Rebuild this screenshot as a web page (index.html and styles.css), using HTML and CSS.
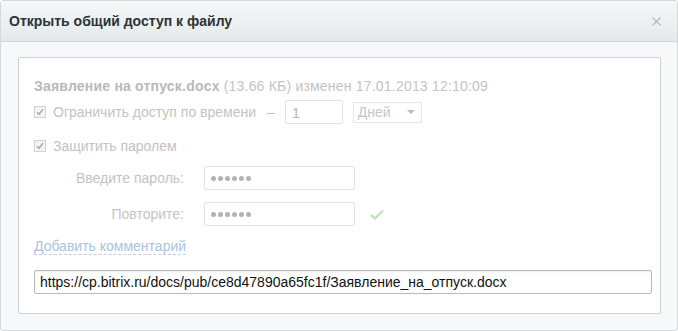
FILE: index.html
```html
<!DOCTYPE html>
<html lang="ru">

<head>
    <meta charset="UTF-8">
    <title>Открыть общий доступ к файлу</title>
    <link rel="stylesheet" href="styles.css">
</head>

<body>
    <div class="dialog">
        <div class="dialog-head">
            <span class="dialog-title">Открыть общий доступ к файлу</span>
            <span class="dialog-close">
                <svg width="9" height="9" viewBox="0 0 9 9"><path d="M0.5 0.5L8.5 8.5M8.5 0.5L0.5 8.5" stroke="#b4b8ba" stroke-width="1.1" fill="none"/></svg>
            </span>
        </div>

        <div class="dialog-body">
            <div class="panel">
                <div class="file-info"><b>Заявление на отпуск.docx</b> (13.66 КБ) изменен 17.01.2013 12:10:09</div>

                <div class="row row-time">
                    <span class="check"><svg width="8" height="8" viewBox="0 0 8 8"><path d="M1 4.2L3 6.3L7 1.2" stroke="#9fb0c6" stroke-width="1.6" fill="none"/></svg></span>
                    <span class="check-label">Ограничить доступ по времени</span>
                    <span class="dash">–</span>
                    <span class="field field-num">1</span>
                    <span class="select">Дней<i class="arrow"></i></span>
                </div>

                <div class="row row-pass">
                    <span class="check"><svg width="8" height="8" viewBox="0 0 8 8"><path d="M1 4.2L3 6.3L7 1.2" stroke="#9fb0c6" stroke-width="1.6" fill="none"/></svg></span>
                    <span class="check-label">Защитить паролем</span>
                </div>

                <div class="row row-field">
                    <span class="label">Введите пароль:</span>
                    <span class="field field-pass"><i></i><i></i><i></i><i></i><i></i><i></i></span>
                </div>

                <div class="row row-field">
                    <span class="label">Повторите:</span>
                    <span class="field field-pass"><i></i><i></i><i></i><i></i><i></i><i></i></span>
                    <svg class="ok" width="14" height="11" viewBox="0 0 14 11"><path d="M1 6L5 9.5L13 1.5" stroke="#c3e2bc" stroke-width="2.4" fill="none"/></svg>
                </div>

                <div class="row-link"><a href="#" class="link">Добавить комментарий</a></div>

                <div class="url">https://cp.bitrix.ru/docs/pub/ce8d47890a65fc1f/Заявление_на_отпуск.docx</div>
            </div>
        </div>
    </div>
</body>

</html>
```

FILE: styles.css
```css
body {
    margin: 0;
    padding: 0;
    background: #fff;
    font-family: "Liberation Sans", Arial, sans-serif;
    font-size: 14px;
}

.dialog {
    width: 676px;
    height: 329px;
    border: 1px solid #d3dadc;
    border-radius: 3px;
    background: #f7f8f9;
}

.dialog-head {
    height: 40px;
    border-bottom: 1px solid #cbd4d6;
    background: linear-gradient(#f6f8f8, #e3e9ea);
    display: flex;
    align-items: center;
    justify-content: space-between;
    padding: 0 16px 0 8px;
}

.dialog-title {
    font-size: 14px;
    font-weight: bold;
    color: #2d3336;
}

.dialog-close {
    display: flex;
    padding-top: 1px;
}

.dialog-body {
    padding: 15px 16px 15px 17px;
}

.panel {
    background: #fff;
    border: 1px solid #c9d3d6;
    border-radius: 2px;
    padding: 20px 8px 19px 15px;
    color: #c3c3c3;
}

.file-info {
    line-height: 16px;
    color: #c3c3c3;
    letter-spacing: 0.2px;
}

.file-info b {
    color: #b9b9b9;
}

.row {
    display: flex;
    align-items: center;
}

.row-time {
    height: 24px;
    margin-top: 6px;
}

.row-pass {
    height: 16px;
    margin-top: 14px;
}

.check {
    width: 10px;
    height: 10px;
    border: 1px solid #d2d2d2;
    background: #f4f4f4;
    display: flex;
    align-items: center;
    justify-content: center;
    margin-right: 7px;
}

.dash {
    margin: 0 10px 0 11px;
    color: #c0c0c0;
}

.field {
    box-sizing: border-box;
    height: 24px;
    border: 1px solid #e2e2e2;
    border-radius: 2px;
    background: #fff;
    display: flex;
    align-items: center;
    padding-left: 6px;
}

.field-num {
    width: 58px;
    color: #b9b9b9;
    font-size: 15px;
}

.select {
    box-sizing: border-box;
    width: 69px;
    height: 21px;
    margin-left: 10px;
    border: 1px solid #e6e6e6;
    display: flex;
    align-items: center;
    justify-content: space-between;
    padding: 0 6px 0 4px;
    color: #c6c6c6;
}

.arrow {
    width: 0;
    height: 0;
    border-left: 4px solid transparent;
    border-right: 4px solid transparent;
    border-top: 4px solid #bdbdbd;
}

.row-field {
    height: 24px;
    margin-top: 12px;
}

.label {
    width: 150px;
    text-align: right;
    margin-right: 20px;
    color: #c4c4c4;
}

.field-pass {
    width: 151px;
    gap: 2px;
}

.field-pass i {
    width: 5px;
    height: 5px;
    border-radius: 50%;
    background: #b3b3b3;
}

.ok {
    margin-left: 15px;
}

.row-link {
    margin-top: 12px;
    line-height: 16px;
}

.link {
    color: #a9c3e2;
    text-decoration: none;
    border-bottom: 1px dashed #bdd0e8;
}

.url {
    box-sizing: border-box;
    height: 24px;
    margin-top: 16px;
    border: 1px solid #b9bcbd;
    border-radius: 2px;
    box-shadow: inset 0 1px 2px rgba(0, 0, 0, 0.08);
    display: flex;
    align-items: center;
    padding-left: 5px;
    color: #111;
}
```
